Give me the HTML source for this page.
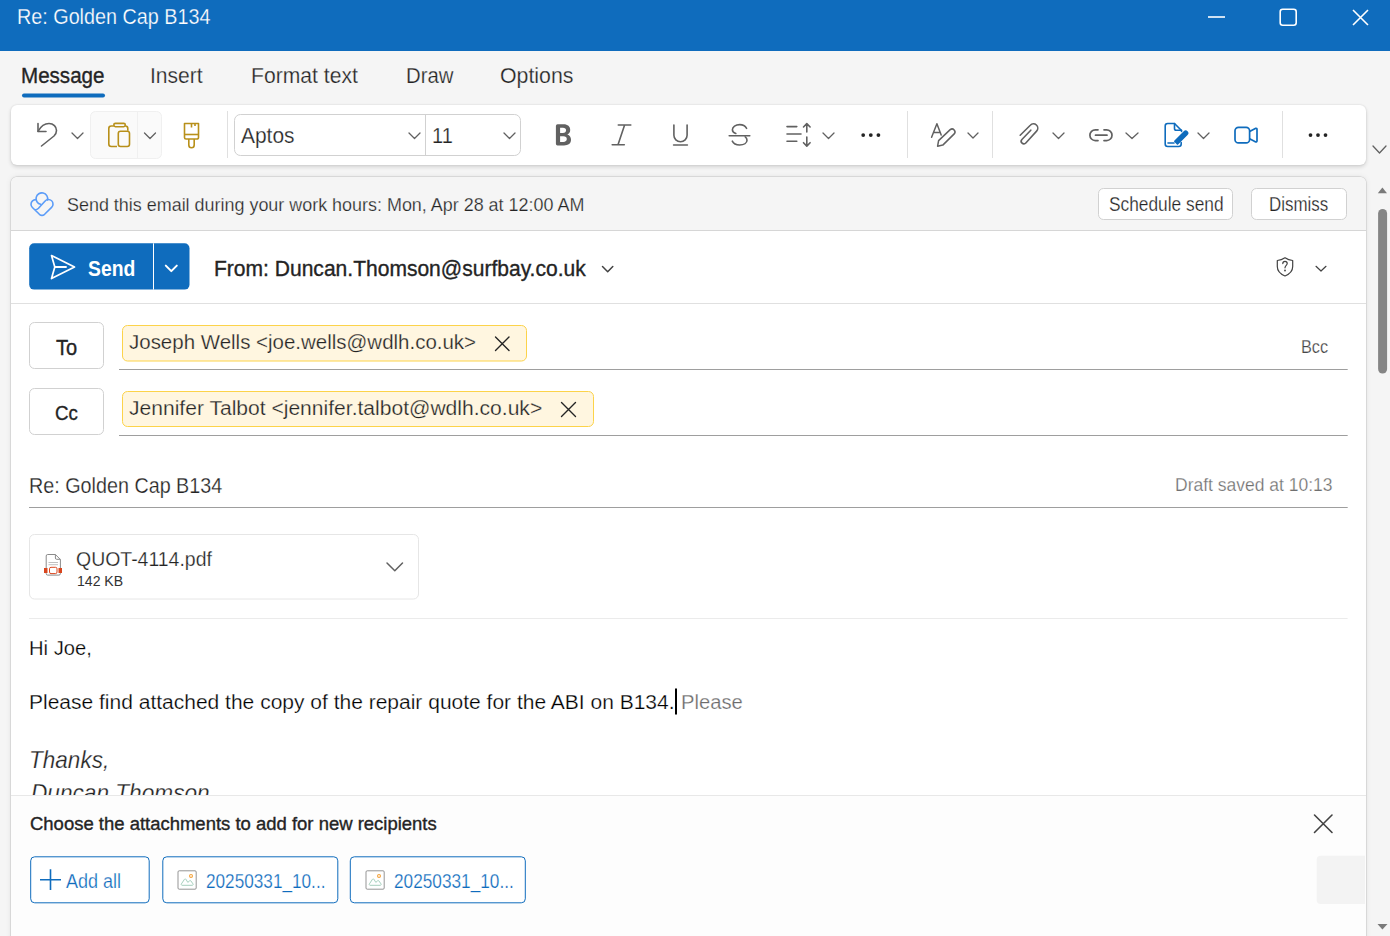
<!DOCTYPE html>
<html><head><meta charset="utf-8"><title>Re: Golden Cap B134</title>
<style>
html,body{margin:0;padding:0;width:1390px;height:936px;overflow:hidden;background:#f5f5f5;font-family:"Liberation Sans",sans-serif;}
.abs{position:absolute;box-sizing:border-box;}
.t{position:absolute;white-space:nowrap;transform-origin:0 0;}
svg.ov{position:absolute;left:0;top:0;}
</style></head><body>
<div class="abs" style="left:0;top:0;width:1390px;height:51px;background:#0f6cbd"></div>
<div class="abs" style="left:11px;top:105px;width:1355px;height:60px;background:#fff;border-radius:6px;box-shadow:0 0 2px rgba(0,0,0,0.12),0 2px 4px rgba(0,0,0,0.14)"></div>
<div class="abs" style="left:11px;top:177px;width:1355px;height:800px;background:#fff;border-radius:6px;box-shadow:0 0 0 0.5px rgba(0,0,0,0.08),0 0 1.5px rgba(0,0,0,0.25),0 0 6px rgba(0,0,0,0.08)"></div>
<div class="abs" style="left:11px;top:177px;width:1355px;height:54px;background:#f5f5f5;border-radius:6px 6px 0 0;border-bottom:1px solid #d6d6d6"></div>
<svg class="ov" width="1390" height="936" viewBox="0 0 1390 936" fill="none">
 <!-- window controls -->
 <g stroke="#fff" stroke-width="1.6">
  <path d="M1208 17H1225"/>
  <rect x="1280.2" y="9.2" width="16" height="16" rx="2.5"/>
  <path d="M1353 10L1368 25M1368 10L1353 25"/>
 </g>
 <!-- tab underline -->
 <rect x="22" y="93.5" width="83" height="4" rx="2" fill="#0f6cbd"/>
 <!-- paste group -->
 <rect x="90.5" y="111.5" width="71" height="47" rx="5" fill="#fafafa" stroke="#f0f0f0"/>
 <path d="M137.5 112V158" stroke="#f0f0f0"/>
 <!-- dividers -->
 <g stroke="#e0e0e0"><path d="M227.5 111V158M907.5 111V158M992.5 111V158M1282.5 111V158"/></g>
 <!-- undo -->
 <g stroke="#616161" stroke-width="1.6" stroke-linecap="round" stroke-linejoin="round">
  <path d="M38 123.5V131.5H46"/>
  <path d="M38 131.3C41 126 44.5 123.5 49 123.5C53.5 123.5 56.5 127 56.5 130.5C56.5 132.8 55.5 134.5 54 136L41.5 146"/>
 </g>
 <!-- chevrons small -->
 <g stroke="#616161" stroke-width="1.3" stroke-linecap="round" stroke-linejoin="round">
  <path d="M72 133L77.5 138.5L83 133"/>
  <path d="M144.5 133L150 138.5L155.5 133"/>
  <path d="M409 133L414.5 138.5L420 133"/>
  <path d="M504 133L509.5 138.5L515 133"/>
  <path d="M823 133L828.5 138.5L834 133"/>
  <path d="M968 133L973 138L978 133"/>
  <path d="M1053 133L1058.5 138.5L1064 133"/>
  <path d="M1126 133L1132 138.5L1138 133"/>
  <path d="M1198 133L1203.5 138.5L1209 133"/>
  <path d="M1373 146L1379.5 153L1386 146"/>
 </g>
 <!-- paste icon -->
 <g stroke="#b8901a" stroke-width="1.6" stroke-linejoin="round">
  <path d="M117 146.5H111.3A2.5 2.5 0 0 1 108.8 144V128.5A2.5 2.5 0 0 1 111.3 126H113.8M125.3 126A2.5 2.5 0 0 1 127.8 128.5V130.8"/>
  <rect x="113.8" y="123.4" width="11.5" height="3.3" rx="1.6"/>
  <rect x="118.3" y="131.2" width="11.2" height="15.3" rx="2.2"/>
 </g>
 <!-- brush -->
 <g stroke="#b8901a" stroke-width="1.6" stroke-linejoin="round">
  <path d="M184.5 123.5H198.5V137.5A1.5 1.5 0 0 1 197 139H186A1.5 1.5 0 0 1 184.5 137.5Z"/>
  <path d="M184.5 134.5H198.5"/>
  <path d="M188.8 139V145A2.7 2.7 0 0 0 194.2 145V139"/>
  <path d="M191.5 123.5V127.5M195 123.5V126"/>
 </g>
 <!-- font dropdown -->
 <rect x="234.5" y="114.5" width="286" height="41" rx="6" stroke="#d1d1d1"/>
 <path d="M425.5 115V155" stroke="#d1d1d1"/>
 <!-- B I U S -->
 <g stroke="#616161" stroke-width="1.6" stroke-linecap="round">
  <path d="M618.3 125H630.8M612.2 144.8H624.3M624.6 125L618 144.8"/>
  <path d="M673.9 125V135.2A6.6 6.6 0 0 0 687.1 135.2V125M673.6 145H687.4"/>
  <path d="M729.2 135.7H749.8"/>
  <path d="M746.6 128.3C745 125.6 742.6 124.6 739.8 124.6C735.5 124.6 732.4 126.9 732.4 129.8C732.4 131.5 733.5 132.8 735.8 133.5"/>
  <path d="M745.2 136.8C746.4 137.6 747 138.9 747 140.3C747 143 744 145 739.6 145C736.2 145 733.4 143.6 732.3 141.2"/>
 </g>
 <path d="M557.5 124.3H563.6C567.8 124.3 570.2 126.6 570.2 129.9C570.2 132 569.2 133.6 567.3 134.4C569.8 135.1 571 137.2 571 139.7C571 143.3 568.3 145.4 564 145.4H557.5A1.6 1.6 0 0 1 555.9 143.8V125.9A1.6 1.6 0 0 1 557.5 124.3Z M560.1 127.8V132.9H562.9C565 132.9 566.1 132 566.1 130.35C566.1 128.7 565 127.8 562.9 127.8Z M560.1 136.2V141.9H563.3C565.6 141.9 566.8 140.9 566.8 139.05C566.8 137.2 565.6 136.2 563.3 136.2Z" fill="#616161" fill-rule="evenodd"/>
 <!-- line spacing -->
 <g stroke="#616161" stroke-width="1.6" stroke-linecap="round" stroke-linejoin="round">
  <path d="M787 126.6H796.8M787 134H801M787 141.3H796.8"/>
  <path d="M806.8 123.8V132M806.8 137V146M803.5 127L806.8 123.6L810.1 127M803.5 142.7L806.8 146.1L810.1 142.7"/>
 </g>
 <!-- more dots -->
 <g fill="#242424">
  <circle cx="863.2" cy="135.1" r="1.9"/><circle cx="870.8" cy="135.1" r="1.9"/><circle cx="878.4" cy="135.1" r="1.9"/>
  <circle cx="1310.5" cy="135.1" r="1.9"/><circle cx="1318" cy="135.1" r="1.9"/><circle cx="1325.5" cy="135.1" r="1.9"/>
 </g>
 <!-- editor icon -->
 <g stroke="#616161" stroke-width="1.5" stroke-linecap="round" stroke-linejoin="round">
  <path d="M931.6 137.2L936.9 123.7L941.2 135M933.9 132.6H939.8"/>
  <path d="M938.6 140.6L950.2 129.6A2.95 2.95 0 0 1 954.2 133.9L942.8 145.1L937.6 146.2Z"/>
 </g>
 <!-- attach -->
 <path d="M1020.2 135.2L1030.3 125.2A4.3 4.3 0 0 1 1036.6 131.1L1025.8 143A2.6 2.6 0 0 1 1021.9 139.5L1030.8 130.2" stroke="#616161" stroke-width="1.6" stroke-linecap="round" stroke-linejoin="round"/>
 <!-- link -->
 <g stroke="#616161" stroke-width="1.7" stroke-linecap="round">
  <path d="M1098 129.8H1095.3A5.4 5.4 0 0 0 1095.3 140.6H1098M1104 129.8H1106.6A5.4 5.4 0 0 1 1106.6 140.6H1104M1095.5 135.2H1107"/>
 </g>
 <!-- signature (blue) -->
 <g stroke="#0f6cbd" stroke-width="1.6" stroke-linejoin="round" stroke-linecap="round">
  <path d="M1181.2 142.5V144A2.5 2.5 0 0 1 1178.7 146.5H1167.7A2.5 2.5 0 0 1 1165.2 144V126A2.5 2.5 0 0 1 1167.7 123.5H1174.5L1181.5 130.5V131.5"/>
  <path d="M1174.5 123.5V128.5A1.8 1.8 0 0 0 1176.3 130.3H1181.5"/>
  <path d="M1168 143H1174"/>
 </g>
 <path d="M1174.8 141.2L1184.3 131.7A1.9 1.9 0 0 1 1187 134.4L1177.5 143.9Z" fill="#0f6cbd" stroke="#0f6cbd" stroke-width="1.6" stroke-linejoin="round"/>
 <!-- video -->
 <g stroke="#0f6cbd" stroke-width="1.7" stroke-linejoin="round">
  <rect x="1235" y="127.3" width="14.6" height="15.6" rx="3.5"/>
  <path d="M1249.6 131.5L1255.8 128.3A1 1 0 0 1 1257 129.2V141A1 1 0 0 1 1255.8 141.9L1249.6 138.7"/>
 </g>
 <!-- banner icon -->
 <g stroke="#5b9cf8" stroke-width="1.6" stroke-linecap="round" stroke-linejoin="round">
  <path d="M40.6 204.3A5.8 5.8 0 1 1 47.5 200"/>
  <path d="M35.6 199.6C33.5 199.6 31 201.5 31 204.3C31 205.6 31.5 206.6 32.4 207.5L39.4 214.3C40.9 215.6 43.1 215.6 44.6 214.3L51.6 207.4C52.5 206.5 53 205.5 53 204.2C53 201.5 50.8 199.5 48.3 199.5C46.9 199.5 45.8 200.2 44.9 201.2L38.5 208.3C37.6 209.2 36.6 209.8 35.5 209.8"/>
 </g>
 <!-- schedule/dismiss buttons -->
 <rect x="1098.5" y="188.5" width="134" height="31" rx="5" fill="#fff" stroke="#d1d1d1"/>
 <rect x="1251.5" y="188.5" width="95" height="31" rx="5" fill="#fff" stroke="#d1d1d1"/>
 <!-- scrollbar -->
 <path d="M1377.8 193.3L1382.4 187.6L1387 193.3Z" fill="#7a7a7a"/>
 <rect x="1378.1" y="209" width="9" height="164.5" rx="4.5" fill="#858585"/>
 <path d="M1377.5 924L1382.4 929.6L1387.5 924Z" fill="#7a7a7a"/>
 <!-- send button -->
 <rect x="29.2" y="243.3" width="160.3" height="46.3" rx="5" fill="#0f6cbd"/>
 <path d="M153.5 243.3V289.6" stroke="#fff" stroke-width="1"/>
 <g stroke="#fff" stroke-width="1.7" stroke-linejoin="round" stroke-linecap="round">
  <path d="M51.5 255.5L74.5 267L51.5 278.5L54.8 267Z"/>
  <path d="M54.8 267H66" stroke-width="1.9"/>
  <path d="M165.8 265.6L171.3 271.1L176.8 265.6" stroke-width="2"/>
 </g>
 <g stroke="#424242" stroke-width="1.5" stroke-linecap="round" stroke-linejoin="round">
  <path d="M602.5 266.5L607.7 271.7L612.8 266.5"/>
 </g>
 <g stroke="#424242" stroke-width="1.2" stroke-linecap="round" stroke-linejoin="round">
  <path d="M1316 266.3L1321 271L1326 266.3"/>
  <path d="M1285 257.8C1282.5 259.5 1280 260.3 1277.3 260.5V266.5C1277.3 271 1280.3 274 1285 276C1289.7 274 1292.7 271 1292.7 266.5V260.5C1290 260.3 1287.5 259.5 1285 257.8Z"/>
  <path d="M1282.8 263.6C1282.8 262.2 1283.8 261.4 1285 261.4C1286.2 261.4 1287.2 262.2 1287.2 263.5C1287.2 265.3 1285 265.5 1285 267.8"/>
 </g>
 <circle cx="1285" cy="270.5" r="0.9" fill="#424242"/>
 <path d="M11 303.5H1366" stroke="#e0e0e0"/>
 <!-- To / Cc buttons -->
 <rect x="29.5" y="322.5" width="74" height="46" rx="5" fill="#fff" stroke="#d1d1d1"/>
 <rect x="29.5" y="388.5" width="74" height="46" rx="5" fill="#fff" stroke="#d1d1d1"/>
 <!-- chips -->
 <rect x="122.5" y="325.5" width="404" height="35.5" rx="5" fill="#fff6e0" stroke="#fcd34a"/>
 <rect x="122.5" y="391.5" width="471" height="35" rx="5" fill="#fff6e0" stroke="#fcd34a"/>
 <g stroke="#242424" stroke-width="1.4" stroke-linecap="round">
  <path d="M495.5 337L509 350.5M509 337L495.5 350.5"/>
  <path d="M561.5 402.5L575.5 416.5M575.5 402.5L561.5 416.5"/>
 </g>
 <path d="M119 369.5H1347.7M119 435.5H1347.7M29 507.5H1347.7" stroke="#9e9e9e"/>
 <!-- attachment card -->
 <rect x="29.5" y="534.5" width="389" height="64.5" rx="5" fill="#fff" stroke="#e6e6e6"/>
 <g stroke="#8a8a8a" stroke-width="1" stroke-linejoin="round">
  <path d="M46.2 568V573.6A1.5 1.5 0 0 0 47.7 575.1H58.9A1.5 1.5 0 0 0 60.4 573.6V559.5L55.4 554.5H47.7A1.5 1.5 0 0 0 46.2 556V568"/>
  <path d="M55.4 554.5V558A1.3 1.3 0 0 0 56.7 559.3H60.4"/>
 </g>
 <path d="M48.5 562.5H58M48.5 564.7H58" stroke="#b0b0b0" stroke-width="0.8"/>
 <rect x="44" y="568" width="3.5" height="5" fill="#d9461e"/>
 <rect x="58.5" y="568" width="3.5" height="5" fill="#d9461e"/>
 <rect x="49.5" y="567.3" width="7.5" height="6.3" rx="1.5" stroke="#d9461e" stroke-width="1"/>
 <path d="M387 563L394.8 570.8L402.5 563" stroke="#616161" stroke-width="1.5" stroke-linecap="round" stroke-linejoin="round"/>
 <path d="M29 618.5H1347.6" stroke="#ebebeb"/>
 <!-- cursor -->
 <rect x="675" y="688.5" width="2" height="26" fill="#000"/>
 <!-- bottom panel -->
 <rect x="11" y="795" width="1355" height="141" fill="#fdfdfd"/>
 <path d="M11 795.5H1366" stroke="#e8e8e8"/>
 <path d="M1314.5 815L1332 832.5M1332 815L1314.5 832.5" stroke="#424242" stroke-width="1.6" stroke-linecap="round"/>
 <path d="M1320.7 855.7H1365V904H1320.7A4 4 0 0 1 1316.7 900V859.7A4 4 0 0 1 1320.7 855.7Z" fill="#f3f3f3"/>
 <rect x="30.7" y="856.8" width="118.5" height="46" rx="4" fill="#fff" stroke="#0f6cbd"/>
 <rect x="162.8" y="856.8" width="175" height="46" rx="4" fill="#fff" stroke="#0f6cbd"/>
 <rect x="350.3" y="856.8" width="175" height="46" rx="4" fill="#fff" stroke="#0f6cbd"/>
 <path d="M40 879.8H61M50.5 869.2V890" stroke="#0f6cbd" stroke-width="1.6"/>
 <g>
  <g transform="translate(0 0)">
  <rect x="178" y="870.8" width="18.2" height="18.4" rx="1.2" fill="#fff" stroke="#8f8f8f" stroke-width="0.95"/>
  <path d="M182.1 885.3H192.3A0.9 0.9 0 0 0 193 883.9L190.9 880.9A0.9 0.9 0 0 0 189.6 880.8L187.8 882.4L186 879.4A0.9 0.9 0 0 0 184.4 879.4L181.4 883.9A0.9 0.9 0 0 0 182.1 885.3Z" stroke="#9cc9b6" stroke-width="0.9" stroke-linejoin="round"/>
  <circle cx="191" cy="875.9" r="1.45" stroke="#f5a33a" stroke-width="1.1"/>
 </g>
 <g transform="translate(188 0)">
  <rect x="178" y="870.8" width="18.2" height="18.4" rx="1.2" fill="#fff" stroke="#8f8f8f" stroke-width="0.95"/>
  <path d="M182.1 885.3H192.3A0.9 0.9 0 0 0 193 883.9L190.9 880.9A0.9 0.9 0 0 0 189.6 880.8L187.8 882.4L186 879.4A0.9 0.9 0 0 0 184.4 879.4L181.4 883.9A0.9 0.9 0 0 0 182.1 885.3Z" stroke="#9cc9b6" stroke-width="0.9" stroke-linejoin="round"/>
  <circle cx="191" cy="875.9" r="1.45" stroke="#f5a33a" stroke-width="1.1"/>
 </g>
 </g>
</svg>
<div class="t" style="left:17.37px;top:6.51px;font-size:21.37px;line-height:21.37px;color:#ffffff;transform:scaleX(0.9255);-webkit-text-stroke:0.25px #0f6cbd">Re: Golden Cap B134</div>
<div class="t" style="left:21.25px;top:65.37px;font-size:21.66px;line-height:21.66px;color:#242424;transform:scaleX(0.9501);-webkit-text-stroke:0.35px #242424">Message</div>
<div class="t" style="left:150.27px;top:64.94px;font-size:21.80px;line-height:21.80px;color:#242424;transform:scaleX(0.9665);-webkit-text-stroke:0.25px #f5f5f5">Insert</div>
<div class="t" style="left:251.13px;top:64.94px;font-size:21.80px;line-height:21.80px;color:#242424;transform:scaleX(0.9692);-webkit-text-stroke:0.25px #f5f5f5">Format text</div>
<div class="t" style="left:405.77px;top:64.94px;font-size:21.80px;line-height:21.80px;color:#242424;transform:scaleX(0.9337);-webkit-text-stroke:0.25px #f5f5f5">Draw</div>
<div class="t" style="left:500.12px;top:64.94px;font-size:21.80px;line-height:21.80px;color:#242424;transform:scaleX(0.9782);-webkit-text-stroke:0.25px #f5f5f5">Options</div>
<div class="t" style="left:241.20px;top:124.83px;font-size:22.53px;line-height:22.53px;color:#242424;transform:scaleX(0.9299);-webkit-text-stroke:0.25px #fff">Aptos</div>
<div class="t" style="left:432.41px;top:124.83px;font-size:22.53px;line-height:22.53px;color:#242424;transform:scaleX(0.8879);-webkit-text-stroke:0.25px #fff">11</div>
<div class="t" style="left:66.80px;top:195.97px;font-size:18.46px;line-height:18.46px;color:#242424;transform:scaleX(0.9726);-webkit-text-stroke:0.25px #f5f5f5">Send this email during your work hours: Mon, Apr 28 at 12:00 AM</div>
<div class="t" style="left:1108.80px;top:195.41px;font-size:19.48px;line-height:19.48px;color:#242424;transform:scaleX(0.8892);-webkit-text-stroke:0.25px #fff">Schedule send</div>
<div class="t" style="left:1268.93px;top:195.41px;font-size:19.48px;line-height:19.48px;color:#242424;transform:scaleX(0.8695);-webkit-text-stroke:0.25px #fff">Dismiss</div>
<div class="t" style="left:87.50px;top:257.92px;font-size:21.95px;line-height:21.95px;color:#ffffff;transform:scaleX(0.8807);font-weight:700">Send</div>
<div class="t" style="left:214.22px;top:258.89px;font-size:21.51px;line-height:21.51px;color:#242424;transform:scaleX(0.9785);-webkit-text-stroke:0.35px #242424">From: Duncan.Thomson@surfbay.co.uk</div>
<div class="t" style="left:56.00px;top:336.92px;font-size:21.95px;line-height:21.95px;color:#242424;transform:scaleX(0.9143);-webkit-text-stroke:0.35px #242424">To</div>
<div class="t" style="left:55.10px;top:403.38px;font-size:20.93px;line-height:20.93px;color:#242424;transform:scaleX(0.8959);-webkit-text-stroke:0.35px #242424">Cc</div>
<div class="t" style="left:129.40px;top:333.34px;font-size:19.91px;line-height:19.91px;color:#242424;transform:scaleX(1.0286);-webkit-text-stroke:0.25px #fff6e0">Joseph Wells &lt;joe.wells@wdlh.co.uk&gt;</div>
<div class="t" style="left:129.40px;top:399.14px;font-size:19.91px;line-height:19.91px;color:#242424;transform:scaleX(1.0579);-webkit-text-stroke:0.25px #fff6e0">Jennifer Talbot &lt;jennifer.talbot@wdlh.co.uk&gt;</div>
<div class="t" style="left:1300.82px;top:338.17px;font-size:18.46px;line-height:18.46px;color:#474747;transform:scaleX(0.8843);-webkit-text-stroke:0.25px #fff">Bcc</div>
<div class="t" style="left:28.99px;top:475.37px;font-size:21.66px;line-height:21.66px;color:#242424;transform:scaleX(0.9120);-webkit-text-stroke:0.25px #fff">Re: Golden Cap B134</div>
<div class="t" style="left:1174.65px;top:476.07px;font-size:18.46px;line-height:18.46px;color:#707070;transform:scaleX(0.9491);-webkit-text-stroke:0.25px #fff">Draft saved at 10:13</div>
<div class="t" style="left:75.98px;top:548.16px;font-size:21.08px;line-height:21.08px;color:#242424;transform:scaleX(0.9230);-webkit-text-stroke:0.25px #fff">QUOT-4114.pdf</div>
<div class="t" style="left:76.66px;top:573.83px;font-size:14.97px;line-height:14.97px;color:#333333;transform:scaleX(0.9394)">142 KB</div>
<div class="t" style="left:28.98px;top:639.17px;font-size:19.77px;line-height:19.77px;color:#000000;transform:scaleX(1.0199);-webkit-text-stroke:0.25px #fff">Hi Joe,</div>
<div class="t" style="left:28.94px;top:693.27px;font-size:19.77px;line-height:19.77px;color:#000000;transform:scaleX(1.0623);-webkit-text-stroke:0.25px #fff">Please find attached the copy of the repair quote for the ABI on B134.</div>
<div class="t" style="left:680.78px;top:693.27px;font-size:19.77px;line-height:19.77px;color:#6b6b6b;transform:scaleX(1.0228);-webkit-text-stroke:0.25px #fff">Please</div>
<div class="t" style="left:30.20px;top:815.97px;font-size:17.88px;line-height:17.88px;color:#242424;transform:scaleX(1.0346);-webkit-text-stroke:0.35px #242424">Choose the attachments to add for new recipients</div>
<div class="t" style="left:65.80px;top:870.57px;font-size:20.35px;line-height:20.35px;color:#0f6cbd;transform:scaleX(0.8852);-webkit-text-stroke:0.25px #fff">Add all</div>
<div class="t" style="left:205.96px;top:870.57px;font-size:20.35px;line-height:20.35px;color:#0f6cbd;transform:scaleX(0.8446);-webkit-text-stroke:0.25px #fff">20250331_10...</div>
<div class="t" style="left:393.65px;top:870.57px;font-size:20.35px;line-height:20.35px;color:#0f6cbd;transform:scaleX(0.8468);-webkit-text-stroke:0.25px #fff">20250331_10...</div>
<div class="abs" style="left:0;top:0;width:1390px;height:795px;overflow:hidden"><div class="t" style="left:29.22px;top:748.10px;font-size:23.98px;line-height:23.98px;color:#242424;transform:scaleX(0.9404);-webkit-text-stroke:0.25px #fff;font-style:italic">Thanks,</div>
<div class="t" style="left:31.30px;top:780.80px;font-size:23.98px;line-height:23.98px;color:#242424;transform:scaleX(0.9441);-webkit-text-stroke:0.25px #fff;font-style:italic">Duncan Thomson</div></div>
</body></html>
